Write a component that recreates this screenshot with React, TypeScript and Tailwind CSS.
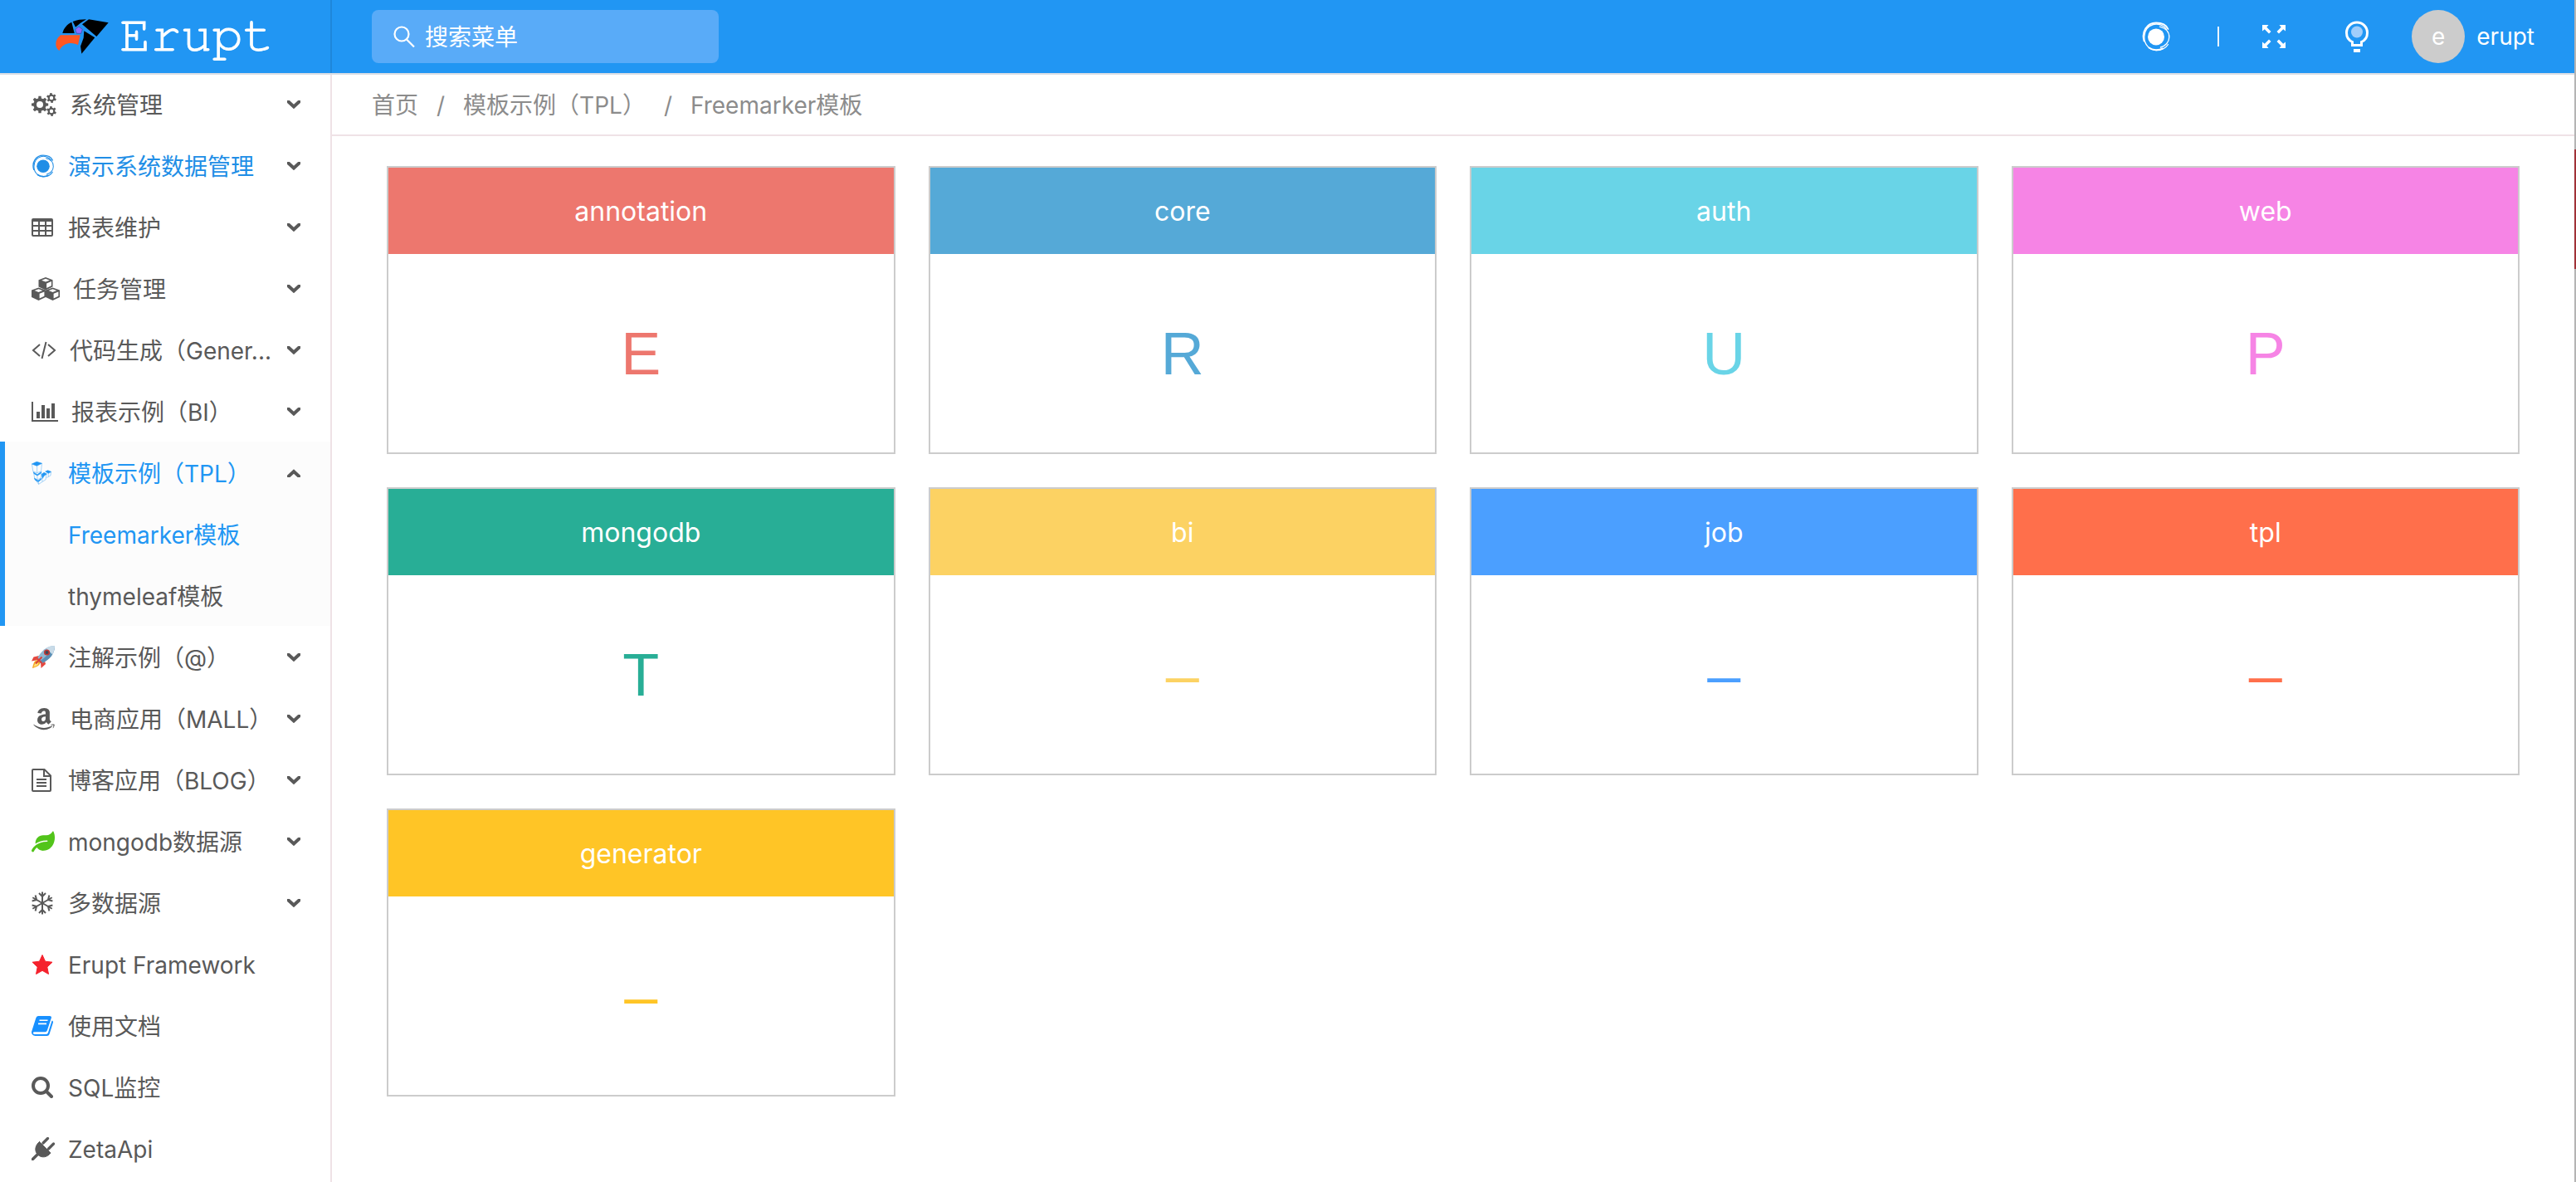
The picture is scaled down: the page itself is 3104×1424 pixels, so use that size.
import React from "react";
import type { ReactNode } from "react";
import { FaAmazon, FaLeaf } from "react-icons/fa";

/* ---------- icons ---------- */

function gearPath(cx: number, cy: number, outer: number, inner: number, hole: number, teeth: number, turn = 0) {
  const points: string[] = [];
  const step = (Math.PI * 2) / teeth;
  for (let i = 0; i < teeth; i++) {
    const a = i * step + turn;
    const corners: [number, number][] = [
      [inner, -0.3],
      [outer, -0.2],
      [outer, 0.2],
      [inner, 0.3],
    ];
    for (const [r, o] of corners) {
      points.push(`${(cx + r * Math.cos(a + o * step)).toFixed(2)} ${(cy + r * Math.sin(a + o * step)).toFixed(2)}`);
    }
  }
  return `M${points.join("L")}ZM${cx - hole} ${cy}a${hole} ${hole} 0 1 0 ${hole * 2} 0a${hole} ${hole} 0 1 0 ${-hole * 2} 0Z`;
}

const CogsIcon = () => (
  <svg width="30" height="28" viewBox="0 0 30 28" fill="currentColor" fillRule="evenodd">
    <path d={gearPath(10, 14, 10.3, 7.8, 4, 8)} />
    <path d={gearPath(24, 6, 6, 4.4, 2.2, 6, 0.4)} />
    <path d={gearPath(24, 22, 6, 4.4, 2.2, 6, 0.4)} />
  </svg>
);

const SwirlIcon = ({ size }: { size: number }) => (
  <svg width={size} height={size} viewBox="0 0 36 36" fill="none" stroke="currentColor" strokeLinecap="round">
    <circle cx="18" cy="18.4" r="10" fill="currentColor" stroke="none" />
    <path d="M18.500 10.500C22 11 24.500 13 25.500 16.500" stroke="white" strokeOpacity="0.01" />
    <path d="M3.500 23.500C0 12 7 1.500 18 1.500C25 1.500 30.500 4.500 32.500 9" strokeWidth="1.800" />
    <path d="M30.500 9.500C27 4 20 2 14.500 3.500C8 5.300 4 11 3.800 18.500C3.600 27.500 10 34.500 18.500 34.500C25 34.500 30 31.500 32.500 27.500" strokeWidth="1.300" />
    <path d="M9.500 31.500C14 34.800 21 35.200 26 32.500" strokeWidth="2" />
    <path d="M22.500 6.200C30 8 34 13 33.800 19C33.600 24.500 29.500 29.500 23.500 31" strokeWidth="1.300" />
  </svg>
);

const TableIcon = () => (
  <svg width="26" height="22" viewBox="0 0 26 22" fill="currentColor" fillRule="evenodd">
    <path d="M2 0h22a2 2 0 0 1 2 2v18a2 2 0 0 1-2 2H2a2 2 0 0 1-2-2V2a2 2 0 0 1 2-2ZM2 4v4h6V4ZM10 4v4h6V4ZM18 4v4h6V4ZM2 10v4h6v-4ZM10 10v4h6v-4ZM18 10v4h6v-4ZM2 16v4h6v-4ZM10 16v4h6v-4ZM18 16v4h6v-4Z" />
  </svg>
);

const cube =
  "M8.500 0L17 3.200V11.500L8.500 15.500L0 11.500V3.200ZM8.500 1.800L3.600 3.700L8.500 5.600L13.400 3.700ZM9.600 7.400V13L15.400 10.300V5.100Z";

const CubesIcon = () => (
  <svg width="34" height="28" viewBox="0 0 34 28" fill="currentColor" fillRule="evenodd">
    <path d={cube} transform="translate(8.500 0)" />
    <path d={cube} transform="translate(0 12.400)" />
    <path d={cube} transform="translate(17 12.400)" />
  </svg>
);

const CodeIcon = () => (
  <svg width="30" height="22" viewBox="0 0 30 22" fill="none" stroke="currentColor" strokeWidth="2">
    <path d="M10 4L2 11L10 18M20 4L28 11L20 18M17.500 1L12.500 21" />
  </svg>
);

const ChartIcon = () => (
  <svg width="32" height="24" viewBox="0 0 32 24" fill="currentColor">
    <path d="M0 0h2v22h30v2H0ZM6 12h4v8H6ZM12 4h4v16h-4ZM18 8h4v12h-4ZM24 2h4v18h-4Z" />
  </svg>
);

const BlocksIcon = () => (
  <svg width="24" height="28" viewBox="24 32 73 86" fill="currentColor" stroke="currentColor" strokeWidth="2">
    <path d="M25 41L43 33L62 39L43 48Z" />
    <path d="M25 41L29 68L44 74L59 68L62 39M44 48V74" fill="none" strokeOpacity="0.6" />
    <path d="M30 71L45 80L60 70L58 76L45 84L33 77Z" />
    <path d="M32 75L35 94L46 99L58 93L60 72M45 82V99" fill="none" strokeOpacity="0.6" />
    <path d="M34 94L48 103L60 94L58 100L48 107L37 100Z" />
    <path d="M36 97L50 116L76 99L79 79M50 106V116M63 106V95" fill="none" strokeOpacity="0.6" />
    <path d="M61 79L70 73L80 78L70 85L64 95Z" />
    <path d="M75 69L84 65L96 70L86 76Z" />
    <path d="M96 70L94 84L80 92M86 76V88" fill="none" strokeOpacity="0.6" />
  </svg>
);

const RocketIcon = () => (
  <svg width="28" height="28" viewBox="0 0 28 28">
    <path d="M9 12L2.500 13.500L0 18.500L8 17Z" fill="#e5483f" />
    <path d="M16 18.500L17 22L11.500 27L11 20Z" fill="#e5483f" />
    <path d="M7 17C3 18 2 22 1 27C6 25.500 9.500 24 10.500 20.500Z" fill="#f6a623" />
    <path d="M6.500 19.500C4 20.500 3.500 23 2.500 25.500C5 24.500 8 23.500 8.500 21.500Z" fill="#ffe27a" />
    <path d="M28 0C19 0 11 6 6.500 16.500L11.500 21.500C22 17 28 9.500 28 0Z" fill="#8fb9d3" />
    <path d="M28 0C23 8 16 15 9 19L11.500 21.500C22 17 28 9.500 28 0Z" fill="#5c8fb5" />
    <path d="M28 0C24 0 20.500 1 17.500 2.800L25.200 10.500C27 7.500 28 4 28 0Z" fill="#c9dbe8" />
    <path d="M7.500 14.500L13.500 20.500L11.500 21.500L6.500 16.500Z" fill="#d8403a" />
    <circle cx="18.500" cy="8" r="3.600" fill="#c43a35" />
    <circle cx="18.500" cy="8" r="2" fill="#3b4a5c" />
    <path d="M12.500 13.500L5 21.500" stroke="#d8403a" strokeWidth="2" />
  </svg>
);

const FileIcon = () => (
  <svg width="24" height="28" viewBox="0 0 24 28" fill="none" stroke="currentColor" strokeWidth="2">
    <path d="M2 1H15.500L23 8.500V26a1 1 0 0 1-1 1H2a1 1 0 0 1-1-1V2a1 1 0 0 1 1-1ZM15 1V9H23M6 13H18M6 17H18M6 21H18" />
  </svg>
);

const SnowflakeIcon = () => (
  <svg width="26" height="28" viewBox="-13 -14 26 28" fill="none" stroke="currentColor" strokeWidth="2">
    {[0, 60, 120, 180, 240, 300].map((turn) => (
      <path key={turn} d="M0 0V-13.500M-4 -12L0 -8L4 -12" transform={`rotate(${turn})`} />
    ))}
  </svg>
);

const StarIcon = () => (
  <svg width="26" height="26" viewBox="0 0 26 26" fill="currentColor" stroke="currentColor" strokeLinejoin="round">
    <path d="M13 1.500L16.500 9.200L25 10.200L18.800 16L20.500 24.500L13 20.300L5.500 24.500L7.200 16L1 10.200L9.500 9.200Z" />
  </svg>
);

const BookIcon = () => (
  <svg width="26" height="24" viewBox="0 0 26 24" fill="none">
    <path
      d="M8 0H22a2 2 0 0 1 1.800 2.600L18.800 17.500a2.500 2.500 0 0 1-2.400 1.700H3.600C2 19.200 1.500 20.300 2 21c.4.800 1.200 1 2.200 1H17.500a2.500 2.500 0 0 0 2.400-1.700L24.600 5.500C25.800 6 26.300 6.800 25.900 8L21.500 22a3 3 0 0 1-2.800 2H4.500C1.500 24 0 21.800 0 19.800C0 19 .1 18.600.5 17.500L5.300 2.500A3.500 3.500 0 0 1 8 0Z"
      fill="currentColor"
    />
    <path d="M9.500 5.200H19.500M8 9.400H18" stroke="white" strokeWidth="1.600" />
  </svg>
);

const MagnifierIcon = () => (
  <svg width="26" height="26" viewBox="0 0 26 26" fill="none" stroke="currentColor" strokeLinecap="round">
    <circle cx="11" cy="11" r="9" strokeWidth="4" />
    <path d="M18 18L24 24" strokeWidth="4" />
  </svg>
);

const PlugIcon = () => (
  <svg width="28" height="28" viewBox="0 0 28 28" fill="currentColor" stroke="currentColor" strokeLinecap="round">
    <path d="M9.500 5.500L23 19C19 24.500 12 25.500 7.500 21C3 16.500 4.500 9.500 9.500 5.500Z" strokeWidth="1" />
    <path d="M14 7L19.500 1.500M20.500 14L26.500 8" strokeWidth="3.200" />
    <path d="M8 20L0 28" strokeWidth="3.400" strokeLinecap="butt" />
  </svg>
);

const ArrowIcon = ({ up = false }: { up?: boolean }) => (
  <svg className="shrink-0" width="16" height="10" viewBox="0 0 16 10" fill="none" stroke="currentColor" strokeWidth="4">
    {up ? <path d="M0.500 10L8 3L15.500 10" /> : <path d="M1.500 1.500L8 7.500L14.500 1.500" strokeLinecap="round" />}
  </svg>
);

const SearchIcon = () => (
  <svg width="26" height="26" viewBox="0 0 26 26" fill="none" stroke="currentColor" strokeWidth="2.200">
    <circle cx="10" cy="10" r="8.500" />
    <path d="M16 16.500L25 25.500" />
  </svg>
);

const ExpandIcon = () => (
  <svg width="28" height="28" viewBox="0 0 28 28" fill="currentColor">
    {[0, 90, 180, 270].map((turn) => (
      <path key={turn} d="M0 0H7.500L5.300 2.800L10.500 8L8 10.500L2.800 5.300L0 7.500Z" transform={`rotate(${turn} 14 14)`} />
    ))}
  </svg>
);

const BulbIcon = () => (
  <svg width="28" height="38" viewBox="0 0 28 38" fill="none" stroke="currentColor">
    <path d="M8.500 29.500V25.500C4 23.500 1.500 19 1.500 14.500C1.500 7.500 7 2 14 2S26.500 7.500 26.500 14.500C26.500 19 24 23.500 19.500 25.500V29.500Z" strokeWidth="3" />
    <circle cx="14" cy="13.500" r="7" fill="#a0cdfb" stroke="none" />
    <path d="M10 36H18" strokeWidth="4" />
  </svg>
);

const BirdLogo = () => (
  <svg width="66" height="44" viewBox="28 34 198 132">
    <path d="M56 88C60 70 72 56 89 48L99 88Z" fill="#000" />
    <path d="M93 46C108 40 124 38 142 38L120 52L103 66Z" fill="#000" />
    <path d="M127 56L151 38L222 50L179 100Z" fill="#000" />
    <path d="M134 80L173 104L125 162L121 135L132 105Z" fill="#000" />
    <path d="M49 95H120L112 131C96 121 60 118 44 151C28 141 26 112 49 95Z" fill="#ff5722" />
    <path d="M115 64L128 74L123 89H107L102 74Z" fill="#8c6cff" stroke="#35459c" strokeWidth="2" />
  </svg>
);

/* ---------- data ---------- */

interface MenuEntry {
  label: string;
  icon: ReactNode;
  iconColor?: string;
  labelColor?: string;
  leaf?: boolean;
}

const menuTop: MenuEntry[] = [
  { label: "系统管理", icon: <CogsIcon /> },
  { label: "演示系统数据管理", icon: <SwirlIcon size={28} />, iconColor: "text-[#218ee6]", labelColor: "text-[#218ee6]" },
  { label: "报表维护", icon: <TableIcon /> },
  { label: "任务管理", icon: <CubesIcon /> },
  { label: "代码生成（Gener...", icon: <CodeIcon /> },
  { label: "报表示例（BI）", icon: <ChartIcon /> },
];

const menuBottom: MenuEntry[] = [
  { label: "注解示例（@）", icon: <RocketIcon /> },
  { label: "电商应用（MALL）", icon: <FaAmazon size={30} /> },
  { label: "博客应用（BLOG）", icon: <FileIcon /> },
  { label: "mongodb数据源", icon: <FaLeaf size={28} />, iconColor: "text-[#52c41a]" },
  { label: "多数据源", icon: <SnowflakeIcon /> },
  { label: "Erupt Framework", icon: <StarIcon />, iconColor: "text-[#f5222d]", leaf: true },
  { label: "使用文档", icon: <BookIcon />, iconColor: "text-[#1890ff]", leaf: true },
  { label: "SQL监控", icon: <MagnifierIcon />, leaf: true },
  { label: "ZetaApi", icon: <PlugIcon />, leaf: true },
];

const cards = [
  { name: "annotation", mark: "E", bg: "bg-[#ed776e]", fg: "text-[#ed776e]" },
  { name: "core", mark: "R", bg: "bg-[#55a9d7]", fg: "text-[#55a9d7]" },
  { name: "auth", mark: "U", bg: "bg-[#69d4e7]", fg: "text-[#69d4e7]" },
  { name: "web", mark: "P", bg: "bg-[#f684e5]", fg: "text-[#f684e5]" },
  { name: "mongodb", mark: "T", bg: "bg-[#28ae96]", fg: "text-[#28ae96]" },
  { name: "bi", mark: "–", bg: "bg-[#fcd263]", fg: "text-[#fcd263]" },
  { name: "job", mark: "–", bg: "bg-[#4b9fff]", fg: "text-[#4b9fff]" },
  { name: "tpl", mark: "–", bg: "bg-[#ff6f4b]", fg: "text-[#ff6f4b]" },
  { name: "generator", mark: "–", bg: "bg-[#ffc526]", fg: "text-[#ffc526]" },
];

/* ---------- parts ---------- */

function MenuRow({ entry }: { entry: MenuEntry }) {
  const inner = (
    <>
      <span className={`flex min-w-7 shrink-0 items-center ${entry.iconColor ?? ""}`}>{entry.icon}</span>
      <span className={`flex-1 pt-0.5 text-left whitespace-nowrap ${entry.labelColor ?? ""}`}>{entry.label}</span>
    </>
  );
  if (entry.leaf) {
    return (
      <li>
        <a href="#" className="flex h-[74px] w-full items-center gap-4 pt-0.5 pr-9 pl-[38px]">
          {inner}
        </a>
      </li>
    );
  }
  return (
    <li>
      <button type="button" className="flex h-[74px] w-full items-center gap-4 pt-0.5 pr-9 pl-[38px]">
        {inner}
        <ArrowIcon />
      </button>
    </li>
  );
}

function Header() {
  return (
    <header className="relative z-10 flex h-[88px] items-center bg-[#2196f3] text-white shadow-[0_2px_0_#d9dde4]">
      <a href="#" className="flex h-full w-[400px] shrink-0 items-center gap-3 border-r-2 border-[#1e87db] pl-[66px]">
        <BirdLogo />
        <span className="pb-1 font-['FreeMono','Liberation_Mono',monospace] text-[62px] leading-none [-webkit-text-stroke:1px_white]">
          Erupt
        </span>
      </a>
      <label className="ml-12 flex h-16 w-[418px] items-center gap-3 rounded-lg bg-[#59abf8] pl-[26px]">
        <SearchIcon />
        <input
          type="text"
          placeholder="搜索菜单"
          aria-label="搜索菜单"
          className="min-w-0 flex-1 bg-transparent pt-0.5 text-[28px] outline-none placeholder:text-white"
        />
      </label>
      <div className="ml-auto flex h-full items-center pr-12">
        <button type="button" aria-label="主题" className="flex w-[100px] justify-center">
          <SwirlIcon size={36} />
        </button>
        <span className="mr-4 ml-6 h-6 w-0.5 bg-white/90" />
        <button type="button" aria-label="全屏" className="flex w-[100px] justify-center">
          <ExpandIcon />
        </button>
        <button type="button" aria-label="提示" className="flex w-[100px] justify-center">
          <BulbIcon />
        </button>
        <button type="button" className="ml-4 flex items-center gap-[14px]">
          <span className="flex size-16 items-center justify-center rounded-full bg-[#ccc]">e</span>
          erupt
        </button>
      </div>
    </header>
  );
}

function Sidebar() {
  return (
    <nav className="w-[400px] shrink-0 border-r-2 border-[#efe2e6]">
      <ul>
        {menuTop.map((entry) => (
          <MenuRow key={entry.label} entry={entry} />
        ))}
        <li className="border-l-6 border-[#2196f3] bg-[#fcfcfc]">
          <button type="button" className="flex h-[74px] w-full items-center gap-4 pt-0.5 pr-9 pl-8">
            <span className="flex min-w-7 text-[#2196f3]">
              <BlocksIcon />
            </span>
            <span className="flex-1 pt-0.5 text-left text-[#2196f3]">模板示例（TPL）</span>
            <ArrowIcon up />
          </button>
          <ul>
            <li>
              <a href="#" className="flex h-[74px] items-center pt-1 pl-[76px] text-[#2196f3]">
                Freemarker模板
              </a>
            </li>
            <li>
              <a href="#" className="flex h-[74px] items-center pt-1 pl-[76px]">
                thymeleaf模板
              </a>
            </li>
          </ul>
        </li>
        {menuBottom.map((entry) => (
          <MenuRow key={entry.label} entry={entry} />
        ))}
      </ul>
    </nav>
  );
}

export default function App() {
  return (
    <div className="flex min-h-screen bg-white font-['Inter','Noto_Sans_CJK_SC',sans-serif] text-[28px] leading-10 text-[#595959]">
      <div className="flex min-w-0 flex-1 flex-col">
        <Header />
        <div className="flex flex-1">
          <Sidebar />
          <main className="min-w-0 flex-1">
            <nav className="flex h-[76px] items-center gap-[22px] border-b-2 border-[#efe2e6] pt-1 pl-12 text-[#8c8c8c]">
              <a href="#">首页</a>
              <span>/</span>
              <a href="#">模板示例（TPL）</a>
              <span>/</span>
              <a href="#">Freemarker模板</a>
            </nav>
            <div className="grid grid-cols-4 gap-10 px-[66px] py-9">
              {cards.map((card) => (
                <section key={card.name} className="border-2 border-[#ccc]">
                  <h2 className={`flex h-[104px] items-center justify-center pt-0.5 text-[32px] text-white ${card.bg}`}>
                    {card.name}
                  </h2>
                  <p
                    className={`flex h-[239px] items-center justify-center font-['Liberation_Sans',Arial,sans-serif] text-[72px] ${card.fg}`}
                  >
                    {card.mark}
                  </p>
                </section>
              ))}
            </div>
          </main>
        </div>
      </div>
      <div className="w-0.5 shrink-0 bg-[#b4b4b4] pt-[180px]">
        <div className="h-36 bg-[#a03238]" />
      </div>
    </div>
  );
}
